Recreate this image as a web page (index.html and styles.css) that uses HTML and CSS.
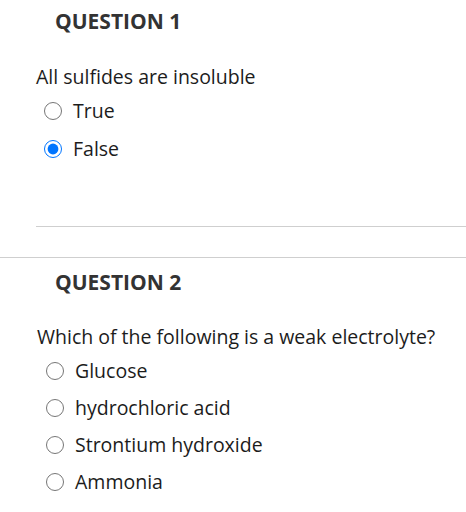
FILE: index.html
```html
<!DOCTYPE html>
<html lang="en">
<head>
<meta charset="utf-8">
<title>Quiz</title>
<link rel="stylesheet" href="styles.css">
</head>
<body>
<section class="question q1">
  <h2 class="q-title">QUESTION 1</h2>
  <div class="q-body">
    <p class="q-text">All sulfides are insoluble</p>
    <ul class="options">
      <li><label class="option"><input type="radio" name="q1"><span>True</span></label></li>
      <li><label class="option"><input type="radio" name="q1" checked><span>False</span></label></li>
    </ul>
  </div>
</section>
<section class="question q2">
  <h2 class="q-title">QUESTION 2</h2>
  <div class="q-body">
    <p class="q-text">Which of the following is a weak electrolyte?</p>
    <ul class="options">
      <li><label class="option"><input type="radio" name="q2"><span>Glucose</span></label></li>
      <li><label class="option"><input type="radio" name="q2"><span>hydrochloric acid</span></label></li>
      <li><label class="option"><input type="radio" name="q2"><span>Strontium hydroxide</span></label></li>
      <li><label class="option"><input type="radio" name="q2"><span>Ammonia</span></label></li>
    </ul>
  </div>
</section>
</body>
</html>
```
FILE: styles.css
```css
html, body {
  margin: 0;
  padding: 0;
  background: #fff;
}
body {
  font-family: "Open Sans", "Liberation Sans", sans-serif;
  color: #1c1c1c;
  overflow: hidden;
}
.question {
  display: flex;
  flex-direction: column;
}
.q-title {
  margin: 0;
  font-size: 21px;
  font-weight: 700;
  line-height: 28px;
  color: #333;
  padding-left: 55px;
}
.q-text {
  margin: 0;
  font-size: 19.5px;
  line-height: 26px;
}
.options {
  list-style: none;
  margin: 0;
  padding: 0;
}
.option {
  display: flex;
  align-items: center;
  height: 38px;
  font-size: 19.5px;
  line-height: 26px;
}
.option input {
  width: 18px;
  height: 18px;
  margin: 0 11px 0 0;
  flex: none;
}
.q1 {
  padding-top: 7px;
}
.q1 .q-body {
  margin-top: 29px;
  margin-left: 36px;
  padding-bottom: 58px;
  border-bottom: 1px solid #cfcfcf;
}
.q1 .options {
  margin-top: 2px;
  padding-left: 8px;
}
.q2 {
  margin-top: 30px;
  border-top: 1px solid #cfcfcf;
  padding-top: 10px;
}
.q2 .q-body {
  margin-top: 28px;
  margin-left: 37px;
}
.q2 .options {
  margin-top: 2px;
  padding-left: 9px;
}
.q2 .option {
  height: 37px;
}
```
